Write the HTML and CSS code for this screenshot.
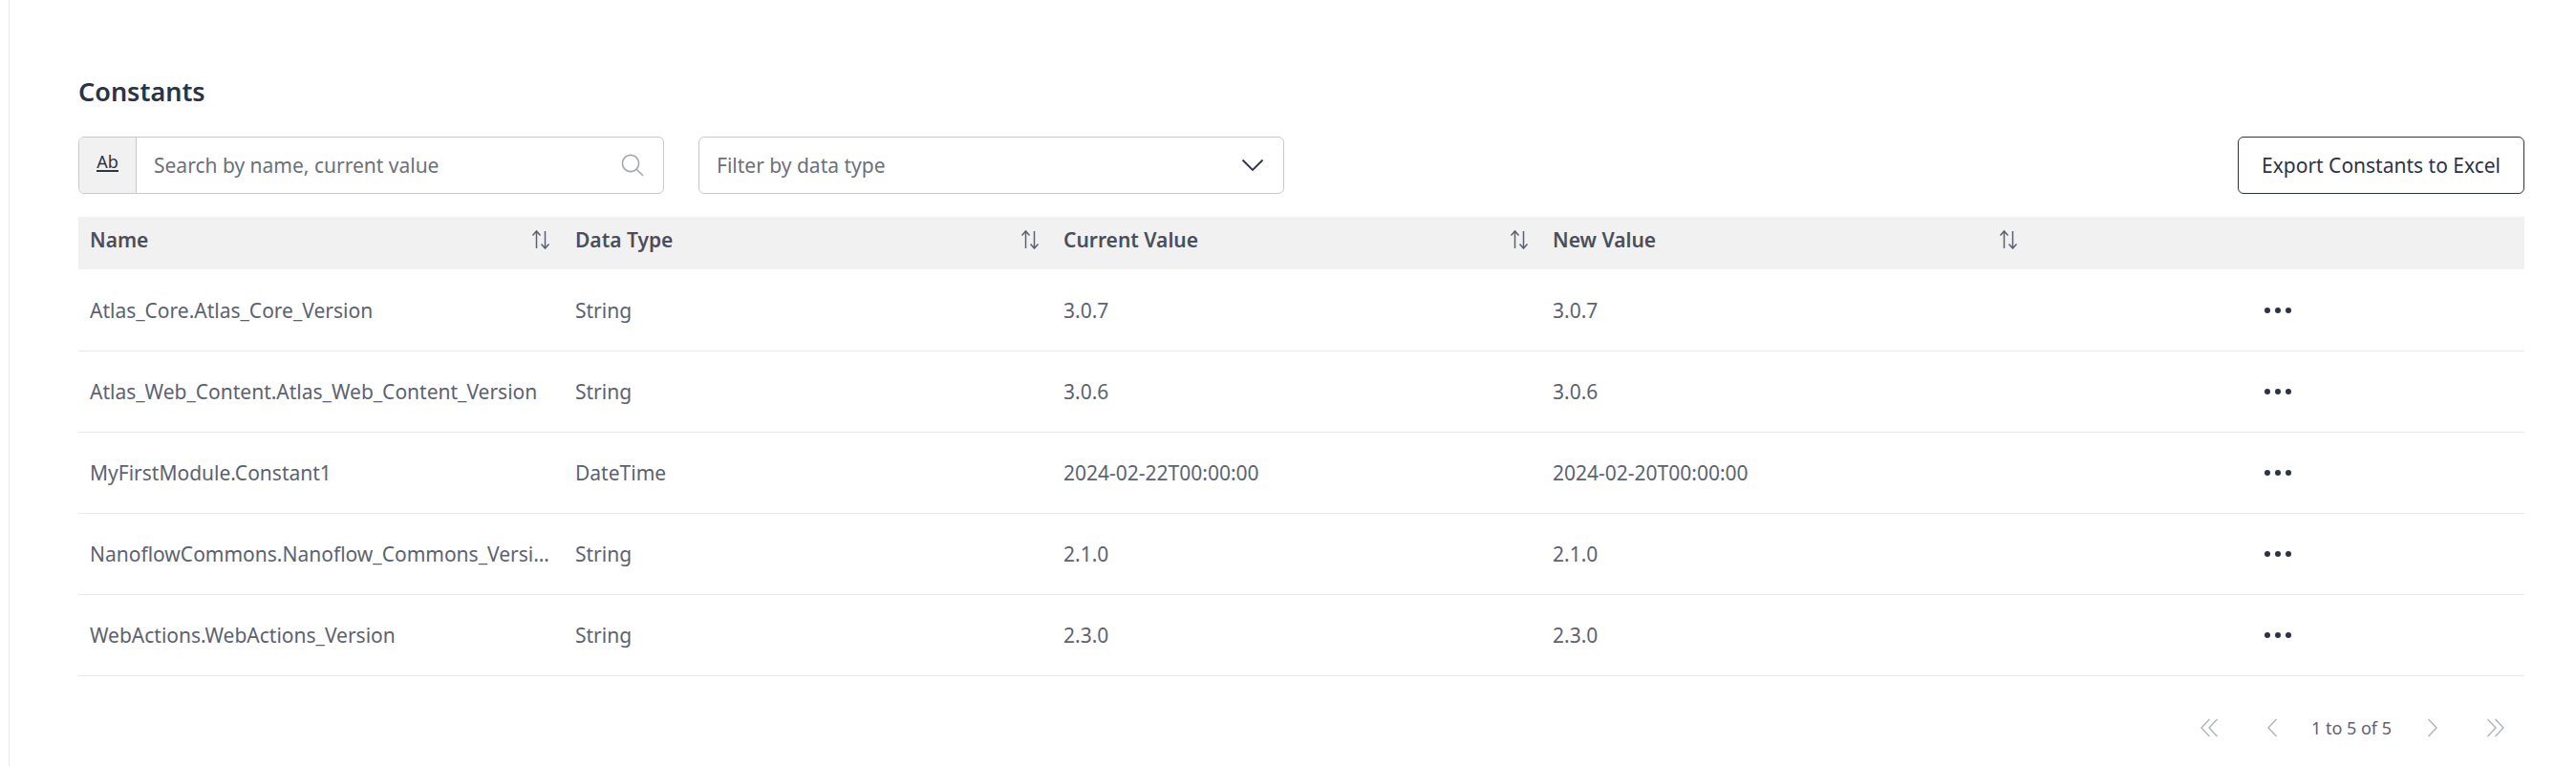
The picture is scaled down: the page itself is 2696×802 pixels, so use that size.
FILE: index.html
```html
<!DOCTYPE html>
<html lang="en">
<head>
    <meta charset="UTF-8">
    <meta name="viewport" content="width=device-width, initial-scale=1.0">
    <title>Constants</title>
    <link rel="stylesheet" href="styles.css">
</head>
<body>

    <main class="page">
        <h2 class="title">Constants</h2>

        <div class="toolbar">
            <div class="field">
                <span class="field-addon"><span class="ab">Ab</span></span>
                <span class="field-text">Search by name, current value</span>
                <svg class="search-icon" width="24" height="24" viewBox="0 0 24 24" fill="none" stroke="#a3a7ae" stroke-width="1.6">
                    <circle cx="10" cy="10" r="8.6"/>
                    <path d="M16.2 16.2 23 23"/>
                </svg>
            </div>
            <div class="field">
                <span class="field-text">Filter by data type</span>
                <svg class="chevron-down" width="24" height="14" viewBox="0 0 24 14" fill="none" stroke="#2c3345" stroke-width="1.8">
                    <path d="M1.5 1.5 12 12 22.5 1.5"/>
                </svg>
            </div>
            <button class="export-btn" type="button">Export Constants to Excel</button>
        </div>

        <div class="table">
            <div class="row head">
                <div class="cell">Name <svg class="sort" width="20" height="22" viewBox="0 0 20 22" fill="none" stroke="#5c6270" stroke-width="1.5"><path d="M5.500 20V2.500M1.500 6.500 5.500 2 9.500 6.500M14.500 2v17.500M10.500 15.500 14.500 20 18.500 15.500"/></svg></div>
                <div class="cell">Data Type <svg class="sort" width="20" height="22" viewBox="0 0 20 22" fill="none" stroke="#5c6270" stroke-width="1.5"><path d="M5.500 20V2.500M1.500 6.500 5.500 2 9.500 6.500M14.500 2v17.500M10.500 15.500 14.500 20 18.500 15.500"/></svg></div>
                <div class="cell">Current Value <svg class="sort" width="20" height="22" viewBox="0 0 20 22" fill="none" stroke="#5c6270" stroke-width="1.5"><path d="M5.500 20V2.500M1.500 6.500 5.500 2 9.500 6.500M14.500 2v17.500M10.500 15.500 14.500 20 18.500 15.500"/></svg></div>
                <div class="cell">New Value <svg class="sort" width="20" height="22" viewBox="0 0 20 22" fill="none" stroke="#5c6270" stroke-width="1.5"><path d="M5.500 20V2.500M1.500 6.500 5.500 2 9.500 6.500M14.500 2v17.500M10.500 15.500 14.500 20 18.500 15.500"/></svg></div>
                <div class="cell"></div>
            </div>

            <div class="row">
                <div class="cell"><span class="clip">Atlas_Core.Atlas_Core_Version</span></div>
                <div class="cell">String</div>
                <div class="cell">3.0.7</div>
                <div class="cell">3.0.7</div>
                <div class="cell"><span class="dots"><i></i><i></i><i></i></span></div>
            </div>
            <div class="row">
                <div class="cell"><span class="clip">Atlas_Web_Content.Atlas_Web_Content_Version</span></div>
                <div class="cell">String</div>
                <div class="cell">3.0.6</div>
                <div class="cell">3.0.6</div>
                <div class="cell"><span class="dots"><i></i><i></i><i></i></span></div>
            </div>
            <div class="row">
                <div class="cell"><span class="clip">MyFirstModule.Constant1</span></div>
                <div class="cell">DateTime</div>
                <div class="cell">2024-02-22T00:00:00</div>
                <div class="cell">2024-02-20T00:00:00</div>
                <div class="cell"><span class="dots"><i></i><i></i><i></i></span></div>
            </div>
            <div class="row">
                <div class="cell"><span class="clip">NanoflowCommons.Nanoflow_Commons_Version</span></div>
                <div class="cell">String</div>
                <div class="cell">2.1.0</div>
                <div class="cell">2.1.0</div>
                <div class="cell"><span class="dots"><i></i><i></i><i></i></span></div>
            </div>
            <div class="row">
                <div class="cell"><span class="clip">WebActions.WebActions_Version</span></div>
                <div class="cell">String</div>
                <div class="cell">2.3.0</div>
                <div class="cell">2.3.0</div>
                <div class="cell"><span class="dots"><i></i><i></i><i></i></span></div>
            </div>
        </div>

        <div class="pager">
            <svg width="18" height="20" viewBox="0 0 18 20" fill="none" stroke="#b0b3b9" stroke-width="1.4"><path d="M9.500 1 1 10l8.500 9M17.500 1 9 10l8.500 9"/></svg>
            <svg width="10" height="20" viewBox="0 0 10 20" fill="none" stroke="#b0b3b9" stroke-width="1.4"><path d="M9.500 1 1 10l8.500 9"/></svg>
            <span class="pager-text">1 to 5 of 5</span>
            <svg width="10" height="20" viewBox="0 0 10 20" fill="none" stroke="#b0b3b9" stroke-width="1.4"><path d="M.5 1 9 10l-8.500 9"/></svg>
            <svg width="18" height="20" viewBox="0 0 18 20" fill="none" stroke="#b0b3b9" stroke-width="1.4"><path d="M.5 1 9 10l-8.500 9M8.500 1 17 10l-8.500 9"/></svg>
        </div>
    </main>

</body>
</html>
```

FILE: styles.css
```css
* {
    box-sizing: border-box;
}

html, body {
    height: 100%;
}

body {
    margin: 0;
    background: #fff;
    font-family: "Noto Sans", "Open Sans", sans-serif;
    font-size: 21px;
    color: #5c6270;
    overflow: hidden;
}

.page {
    height: 802px;
    margin-left: 9px;
    padding: 77px 54px 0 72px;
    border-left: 1px solid #e8e8e8;
}

.title {
    margin: 0 0 29px;
    font-size: 27px;
    line-height: 37px;
    font-weight: 600;
    color: #2c3345;
}

.toolbar {
    display: flex;
    gap: 36px;
    height: 60px;
    margin-bottom: 24px;
}

.field {
    display: flex;
    align-items: center;
    width: 613px;
    border: 1px solid #c8c9cd;
    border-radius: 6px;
    overflow: hidden;
}

.field-addon {
    display: flex;
    align-items: center;
    justify-content: center;
    width: 60px;
    height: 100%;
    background: #f1f1f1;
    border-right: 1px solid #c8c9cd;
}

.ab {
    font-size: 18px;
    line-height: 18px;
    color: #2c3345;
    border-bottom: 2px solid #2c3345;
    margin-top: -6px;
}

.field-text {
    flex: 1;
    padding-left: 18px;
    color: #6b7079;
}

.search-icon {
    margin-right: 20px;
}

.chevron-down {
    margin-right: 20px;
}

.export-btn {
    margin-left: auto;
    width: 300px;
    height: 60px;
    padding: 0;
    background: #fff;
    border: 1px solid #2c3345;
    border-radius: 6px;
    font: inherit;
    color: #2c3345;
}

.row {
    display: grid;
    grid-template-columns: 508px 511px 512px 733px 296px;
    height: 85px;
    border-bottom: 1px solid #e8e8e8;
}

.row.head {
    height: 55px;
    margin-bottom: 1px;
    background: #f1f1f1;
    border-bottom: none;
    font-weight: 600;
    color: #4a4f5c;
}

.cell {
    display: flex;
    align-items: center;
    min-width: 0;
    padding: 0 12px;
}

.head .cell {
    justify-content: space-between;
    padding-bottom: 7px;
}

.head .cell:nth-child(4) {
    justify-content: flex-start;
    gap: 359px;
}

.sort {
    flex: none;
    margin-right: 2px;
}

.head .cell:nth-child(n+2) .sort {
    margin-right: 1px;
}

.clip {
    overflow: hidden;
    white-space: nowrap;
    text-overflow: ellipsis;
}

.dots {
    display: flex;
    gap: 5px;
    margin-left: 12px;
}

.dots i {
    width: 6px;
    height: 6px;
    border-radius: 50%;
    background: #2c3345;
}

.pager {
    display: flex;
    align-items: center;
    justify-content: flex-end;
    height: 107px;
    padding-right: 21px;
    font-size: 18px;
}

.pager svg {
    flex: none;
}

.pager-text {
    margin: 0 38px 0 36px;
}

.pager svg:first-child {
    margin-right: 52px;
}

.pager svg:last-child {
    margin-left: 52px;
}
```
